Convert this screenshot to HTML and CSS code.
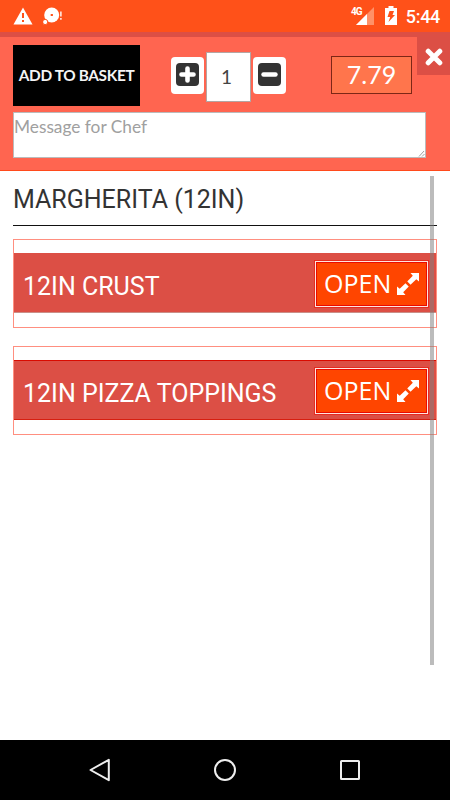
FILE: index.html
```html
<!DOCTYPE html>
<html lang="en">
<head>
<meta charset="utf-8">
<title>Margherita options</title>
<link rel="stylesheet" href="styles.css">
</head>
<body>
<div class="phone">
  <div class="status">
    <svg class="status-warn" width="20" height="18" viewBox="0 0 20 18"><path d="M10 .5 19.500 17.500H.5Z" fill="#fff"/><path d="M10 6v5M10 13v2" stroke="#ff5119" stroke-width="2"/></svg>
    <svg class="status-disc" width="20" height="18" viewBox="0 0 20 18"><circle cx="8.700" cy="8" r="7.500" fill="#fff"/><circle cx="2.200" cy="15" r="2.600" fill="#fff" stroke="#ff5119" stroke-width="1"/><rect x="7.700" y="7" width="2.200" height="2" fill="#ff5119"/><path d="M17.900 4.500v5M17.900 11v1.700" stroke="#fff" stroke-width="1.400"/></svg>
    <span class="net">4G</span>
    <svg class="signal" width="18" height="18" viewBox="0 0 18 18"><path d="M18 0V18H0Z" fill="#ff9168"/><path d="M11 7V18H0Z" fill="#fff"/></svg>
    <svg class="battery" width="12" height="19" viewBox="0 0 12 19"><path d="M3.500 0h5v2H12v17H0V2h3.500Z" fill="#fff"/><path d="M4.500 5H9L7.500 9H10L3.500 16 5.200 11H2.500Z" fill="#ff5119"/></svg>
    <span class="clock">5:44</span>
  </div>
  <header class="order">
    <div class="controls">
      <button class="basket">ADD TO BASKET</button>
      <button class="step"><svg width="23" height="23" viewBox="0 0 23 23"><rect width="23" height="23" rx="4" fill="#333"/><path d="M11.500 5.500v12M5.500 11.500h12" stroke="#fff" stroke-width="4.600" stroke-linecap="round"/></svg></button>
      <div class="qty">1</div>
      <button class="step"><svg width="23" height="23" viewBox="0 0 23 23"><rect width="23" height="23" rx="4" fill="#333"/><path d="M5.500 11.500h12" stroke="#fff" stroke-width="4.400" stroke-linecap="round"/></svg></button>
      <div class="price">7.79</div>
      <button class="close"><svg width="18" height="18" viewBox="0 0 18 18"><path d="M3.200 3.200 14.800 14.800M14.800 3.200 3.200 14.800" stroke="#fff" stroke-width="5" stroke-linecap="round"/></svg></button>
    </div>
    <div class="message"><span>Message for Chef</span><svg class="grip" width="7" height="7" viewBox="0 0 7 7"><path d="M1 6.500 6 1M4 6.500 6.500 4" stroke="#888" stroke-width=".8"/></svg></div>
  </header>
  <main class="options">
    <h1>MARGHERITA (12IN)</h1>
    <section class="card">
      <div class="bar">
        <span class="name">12IN CRUST</span>
        <button class="open"><span>OPEN</span><svg width="22" height="22" viewBox="0 0 22 22"><path d="M13.500 0H22V8.500L19.300 6.200 13.500 11.800 10.200 8.500 15.800 2.700ZM0 13.500 2.700 15.800 8.500 10.200 11.800 13.500 6.200 19.300 8.500 22H0Z" fill="#fff"/><path d="M8.500 8.500 13.500 13.500" stroke="#ff4500" stroke-width="2"/></svg></button>
      </div>
    </section>
    <section class="card">
      <div class="bar crisp">
        <span class="name">12IN PIZZA TOPPINGS</span>
        <button class="open"><span>OPEN</span><svg width="22" height="22" viewBox="0 0 22 22"><path d="M13.500 0H22V8.500L19.300 6.200 13.500 11.800 10.200 8.500 15.800 2.700ZM0 13.500 2.700 15.800 8.500 10.200 11.800 13.500 6.200 19.300 8.500 22H0Z" fill="#fff"/><path d="M8.500 8.500 13.500 13.500" stroke="#ff4500" stroke-width="2"/></svg></button>
      </div>
    </section>
    <div class="scroll"></div>
  </main>
  <nav class="nav">
    <svg width="24" height="26" viewBox="0 0 24 26"><path d="M20.800 2.800V23.200L2.500 13Z" fill="none" stroke="#eee" stroke-width="2" stroke-linejoin="round"/></svg>
    <svg width="24" height="26" viewBox="0 0 24 26"><circle cx="12" cy="13" r="10" fill="none" stroke="#eee" stroke-width="2"/></svg>
    <svg width="24" height="26" viewBox="0 0 24 26"><rect x="3" y="4" width="18" height="18" rx=".5" fill="none" stroke="#eee" stroke-width="2"/></svg>
  </nav>
</div>
</body>
</html>
```
FILE: styles.css
```css
* { box-sizing: border-box; }
body { margin: 0; background: #fff; }
button { margin: 0; padding: 0; border: 0; }
svg { display: block; flex: none; }
.phone { width: 450px; height: 800px; display: flex; flex-direction: column; overflow: hidden; }

.status { height: 32px; flex: none; background: #ff5119; display: flex; align-items: flex-start; color: #fff; font-family: Roboto, sans-serif; padding: 7px 10px 0 13px; }
.status-disc { margin-left: 10px; }
.net { margin-left: auto; font-size: 10px; line-height: 10px; font-weight: 700; letter-spacing: -.9px; }
.signal { margin-left: -6px; }
.battery { margin: -1px 0 0 11px; }
.clock { font-size: 18px; line-height: 20px; margin-left: 9px; font-weight: 500; letter-spacing: -.3px; }

.order { height: 139px; flex: none; background: #ff6550; border-top: 5px solid #dc4f45; border-bottom: 1px solid #ff4a1c; padding: 0 0 0 13px; font-family: Lato, sans-serif; }
.controls { height: 69px; display: flex; align-items: flex-start; }
.basket { width: 127px; height: 61px; margin-top: 8px; background: #000; color: #f4f4f4; font: 700 15.4px/61px Lato, sans-serif; letter-spacing: -.35px; white-space: nowrap; }
.step { width: 33px; height: 37px; margin-top: 20px; background: #fff; border-radius: 4px; display: flex; justify-content: center; padding-top: 6px; }
.basket + .step { margin-left: 31px; }
.qty { width: 45px; height: 50px; margin: 15px 2px 0; background: #fff; border: 1px solid #b4a5a3; text-align: center; font-size: 19px; line-height: 48px; color: #444; padding-right: 4px; }
.price { width: 81px; height: 38px; margin: 19px 0 0 45px; border: 1px solid #7d2616; background: #ff754c; color: #fff; text-align: center; font-size: 25px; line-height: 35px; }
.close { width: 33px; height: 38px; margin-left: auto; background: #dc4f45; display: flex; justify-content: center; padding-top: 11px; }
.message { width: 413px; height: 46px; margin: 6px 0 0; border: 1px solid #bbb; background: #fff; color: #a0a0a0; font-size: 17.3px; line-height: 27px; display: flex; justify-content: space-between; }
.grip { align-self: flex-end; }

.options { flex: 1; position: relative; padding: 0 13px; font-family: Roboto, sans-serif; }
h1 { height: 55px; margin: 0 0 13px; border-bottom: 1px solid #111; font-size: 25px; font-weight: 400; line-height: 58px; color: #333; white-space: nowrap; }
.card { height: 89px; margin-bottom: 18px; border: 1px solid #ff8f80; padding-top: 13px; }
.bar { height: 60px; background: #dc4f45; display: flex; justify-content: space-between; padding: 8px 8px 0 9px; border-bottom: 1px solid #c98f88; }
.crisp { border-top: 1px solid #d90b00; border-bottom-color: #d71f10; padding-top: 7px; }
.name { font-size: 25px; line-height: 51px; color: #fff; white-space: nowrap; }
.open { width: 113px; height: 46px; background: #ff4500; border: 1px solid #ffe5df; box-shadow: inset 0 0 0 1px #e90c00, 0 0 0 1px #e52b20; display: flex; align-items: center; color: #fff; font: 400 25px/44px "Open Sans", sans-serif; padding: 0 0 0 8px; }
.open span { width: 73px; height: 44px; text-align: left; line-height: 42px; }
.scroll { position: absolute; left: 430px; top: 5px; width: 4px; height: 489px; background: rgba(128, 128, 128, .53); }

.nav { height: 60px; flex: none; background: #000; display: flex; align-items: center; justify-content: space-between; padding: 0 88px; }
```
